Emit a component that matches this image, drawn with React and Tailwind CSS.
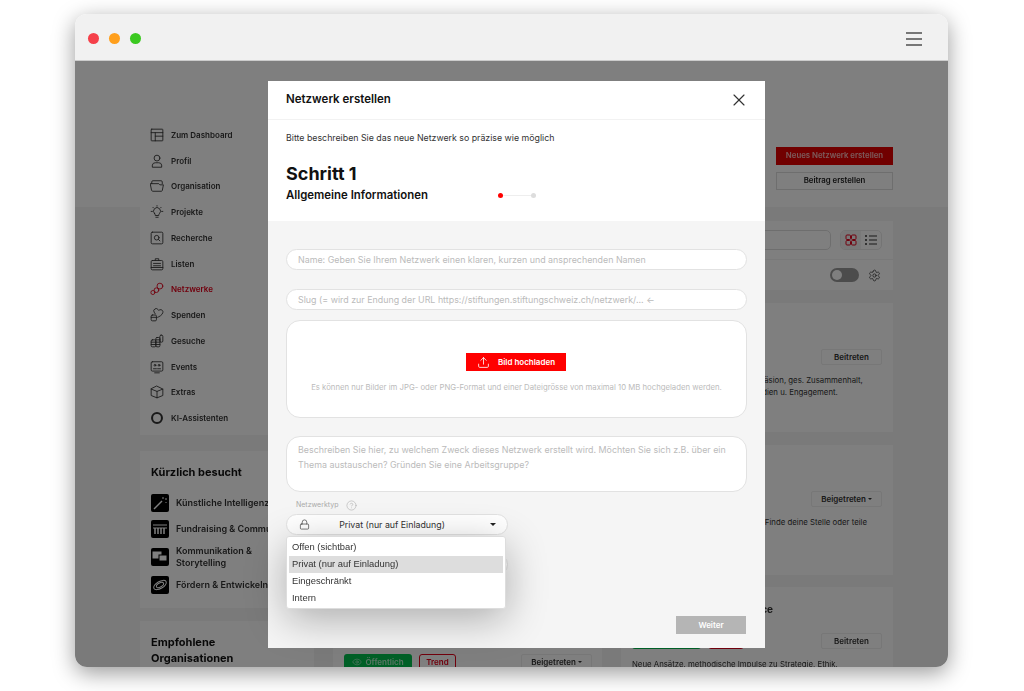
import { Settings, Lock, Upload, X, CircleHelp, Eye } from "lucide-react";

const FONT = "font-['Inter','Noto_Sans',sans-serif]";

// small outline icons of the sidebar, drawn on a 24 grid
const IconBase = ({ children }) => (
  <svg viewBox="0 0 24 24" className="w-[14px] h-[14px] shrink-0" fill="none" stroke="currentColor" strokeWidth="1.5" strokeLinecap="round" strokeLinejoin="round">
    {children}
  </svg>
);

const navIcons = {
  dashboard: <><rect x="2" y="2" width="20" height="20" rx="1" /><path d="M2 8h20M9 8v14M9 14h13" /></>,
  user: <><circle cx="12" cy="7" r="5" /><path d="M4 22v-3a5 5 0 0 1 5-4h6a5 5 0 0 1 5 4v3z" /></>,
  folder: <><path d="M3 8V5a2 2 0 0 1 2-2h14a2 2 0 0 1 2 2v3" /><path d="M1 8h14l2 2h6l-2 10a2 2 0 0 1-2 1H5a2 2 0 0 1-2-1z" /></>,
  bulb: <><path d="M8 15a6 6 0 1 1 8 0c-1 1-1 2-1 3H9c0-1 0-2-1-3z" /><path d="M10 21h4M12 1v1M2 11h2M20 11h2M5 4l1 1M19 4l-1 1" /></>,
  search: <><rect x="2" y="2" width="20" height="20" rx="2" /><circle cx="11.5" cy="11.5" r="4" /><path d="M14.5 14.5L17 17" /></>,
  list: <><rect x="2" y="6" width="20" height="16" rx="2" /><path d="M9 6V3h6v3M6 11h12M6 15h12M2 18h20" /></>,
  network: <><circle cx="17" cy="7" r="5" /><circle cx="11" cy="14" r="4" /><circle cx="5" cy="18" r="3.5" /></>,
  heart: <><path d="M9 10L7 7a4 4 0 0 1 7-4l1 1 2-1a4 4 0 0 1 5 5c-1 4-6 7-9 8" /><rect x="2" y="12" width="9" height="10" rx="2" /><path d="M2 16h9" /></>,
  coins: <><rect x="2" y="10" width="8" height="12" rx="2" /><rect x="10" y="6" width="7" height="16" rx="2" /><rect x="17" y="2" width="5" height="12" rx="2" /><path d="M2 14h8M2 18h8M10 10h7M10 14h7M10 18h7" /></>,
  events: <><rect x="2" y="3" width="20" height="16" rx="2" /><path d="M8 22h8" /><circle cx="8.5" cy="9" r="1.5" /><circle cx="15.5" cy="9" r="1.5" /><path d="M6 15h5M13 15h5" /></>,
  box: <><path d="M12 2l10 5v11l-10 4-10-4V7z" /><path d="M2 7l10 4 10-4M12 11v11" /></>,
  ring: <circle cx="12" cy="12" r="8.5" strokeWidth="3.5" />,
};

const navItems = [
  ["dashboard", "Zum Dashboard"],
  ["user", "Profil"],
  ["folder", "Organisation"],
  ["bulb", "Projekte"],
  ["search", "Recherche"],
  ["list", "Listen"],
  ["network", "Netzwerke"],
  ["heart", "Spenden"],
  ["coins", "Gesuche"],
  ["events", "Events"],
  ["box", "Extras"],
  ["ring", "KI-Assistenten"],
];

const Thumb = ({ children }) => (
  <div className="w-[18px] h-[18px] bg-black rounded-[2px] shrink-0">
    <svg viewBox="0 0 18 18" className="w-full h-full" fill="none" stroke="white" strokeWidth="1">{children}</svg>
  </div>
);

function Sidebar() {
  return (
    <div className="w-[174px] shrink-0 flex flex-col">
      <div className="bg-white h-[326px] pl-[10px] pt-[13px]">
        {navItems.map(([icon, label]) => (
          <div key={label} className={`h-[25.75px] flex items-center gap-[7px] text-[8px] font-semibold ${label === "Netzwerke" ? "text-[#e2001a]" : "text-[#333]"}`}>
            <IconBase>{navIcons[icon]}</IconBase>
            <span>{label}</span>
          </div>
        ))}
      </div>

      <div className="bg-white h-[157px] mt-[16px] px-[11px] pt-[13px] overflow-hidden">
        <h3 className="text-[11px] leading-[16px] font-bold text-[#111]">Kürzlich besucht</h3>
        <div className="mt-[14px] flex flex-col gap-[8px] text-[9px] font-semibold text-[#333]">
          <div className="flex items-center gap-[7px] whitespace-nowrap">
            <Thumb><path d="M3 15l8-8" strokeWidth="1.5" /><path d="M12 3v2M14 5h2M15 8v1" /></Thumb>
            <span>Künstliche Intelligenz</span>
          </div>
          <div className="flex items-center gap-[7px] whitespace-nowrap">
            <Thumb><path d="M2 5h14M2 8h14" /><path d="M4 8v6M7 8v6M10 8v6M13 8v6" strokeWidth="1.5" /></Thumb>
            <span>Fundraising &amp; Communication</span>
          </div>
          <div className="flex items-start gap-[7px] mt-[2px]">
            <Thumb><rect x="2" y="4" width="8" height="6" fill="white" /><rect x="8" y="7" width="8" height="6" fill="white" stroke="black" /></Thumb>
            <span className="leading-[12px] mt-[-3px]">Kommunikation &amp;<br />Storytelling</span>
          </div>
          <div className="flex items-center gap-[7px] whitespace-nowrap mt-[-1px]">
            <Thumb><ellipse cx="9" cy="9" rx="7" ry="3.5" transform="rotate(-30 9 9)" /><ellipse cx="9" cy="9" rx="4" ry="2" transform="rotate(-30 9 9)" /></Thumb>
            <span>Fördern &amp; Entwickeln</span>
          </div>
        </div>
      </div>

      <div className="bg-white mt-[13px] px-[11px] pt-[13px] h-[100px]">
        <h3 className="text-[11px] leading-[16px] font-bold text-[#111]">Empfohlene<br />Organisationen</h3>
      </div>
    </div>
  );
}

const JoinButton = ({ children, className = "px-[12px]" }) => (
  <div className={`h-[16px] border border-[#eee] rounded-[2px] flex items-center gap-[2px] text-[8px] font-semibold text-[#333] whitespace-nowrap ${className}`}>
    {children}
  </div>
);

const Caret = () => <span className="border-x-[2px] border-x-transparent border-t-[2px] border-t-[#333]" />;

function Main() {
  return (
    <div className="w-[560px] shrink-0 flex flex-col">
      <div className="mt-[38px] self-end w-[117px] flex flex-col gap-[7px] text-[7.8px] font-semibold">
        <div className="h-[18px] bg-[#e30000] text-white/70 flex items-center justify-center">Neues Netzwerk erstellen</div>
        <div className="h-[18px] border border-[#ddd] text-[#222] flex items-center justify-center">Beitrag erstellen</div>
      </div>

      <div className="mt-[31px] bg-white h-[69px] flex flex-col">
        <div className="h-[39px] border-b border-[#f2f2f2] flex items-center justify-end pr-[11px] gap-[9px]">
          <div className="w-[200px] h-[20px] border border-[#ddd] rounded-[5px]" />
          <div className="w-[42px] h-[20px] border border-[#e8e8e8] rounded-[5px] flex overflow-hidden">
            <div className="w-[20px] bg-[#f2f2f2] flex items-center justify-center">
              <svg viewBox="0 0 12 12" className="w-[12px] h-[12px]" fill="none" stroke="#e2001a" strokeWidth="1"><rect x="1" y="1" width="4.5" height="4.5" rx="1" /><rect x="6.5" y="1" width="4.5" height="4.5" rx="1" /><rect x="1" y="6.5" width="4.5" height="4.5" rx="1" /><rect x="6.5" y="6.5" width="4.5" height="4.5" rx="1" /></svg>
            </div>
            <div className="flex-1 flex items-center justify-center">
              <svg viewBox="0 0 12 12" className="w-[12px] h-[12px]" fill="none" stroke="#333" strokeWidth="1"><path d="M4 2h8M4 6h8M4 10h8" /><path d="M0 2h2M0 6h2M0 10h2" strokeWidth="1.6" /></svg>
            </div>
          </div>
        </div>
        <div className="flex-1 flex items-center justify-end pr-[12px] gap-[9px]">
          <div className="w-[29px] h-[14px] rounded-full bg-[#999] p-[2px]"><div className="w-[10px] h-[10px] rounded-full bg-white" /></div>
          <Settings className="w-[13px] h-[13px] text-[#333]" strokeWidth={1.4} />
        </div>
      </div>

      <div className="mt-[13px] grid grid-cols-[269px_272px] gap-x-[19px] gap-y-[12.5px]">
        <div className="bg-white h-[129px]" />
        <div className="bg-white h-[129px] px-[11px] pt-[46px]">
          <div className="flex justify-end"><JoinButton>Beitreten</JoinButton></div>
          <p className="mt-[9px] ml-[118px] text-[7.8px] leading-[12px] text-[#333] whitespace-nowrap">Kohäsion, ges. Zusammenhalt,<br />Studien u. Engagement.</p>
        </div>
        <div className="bg-white h-[130px]" />
        <div className="bg-white h-[130px] px-[11px] pt-[46px]">
          <div className="flex justify-end"><JoinButton className="px-[9px]">Beigetreten <Caret /></JoinButton></div>
          <p className="mt-[9px] ml-[8px] text-[7.8px] leading-[12px] text-[#333] whitespace-nowrap">Offene Stellen im Stiftungssektor. Finde deine Stelle oder teile</p>
        </div>
        <div className="bg-white h-[120px] px-[11px] pt-[67px]">
          <div className="flex items-center gap-[7px]">
            <div className="w-[68px] h-[16px] bg-[#00c04f] rounded-[3px] text-white/70 text-[8px] font-semibold flex items-center justify-center gap-[3px]"><Eye className="w-[10px] h-[10px]" strokeWidth={1.5} />Öffentlich</div>
            <div className="w-[37px] h-[16px] border border-[#e2001a] rounded-[3px] text-[#e2001a] text-[8px] font-semibold flex items-center justify-center">Trend</div>
            <div className="ml-auto mr-[-1px]"><JoinButton className="px-[9px]">Beigetreten <Caret /></JoinButton></div>
          </div>
        </div>
        <div className="bg-white h-[120px] px-[11px] pt-[14px]">
          <p className="text-[10px] leading-[16px] font-bold text-[#333] text-right pr-[109px]">Governance</p>
          <div className="mt-[16px] flex items-center gap-[7px]">
            <div className="w-[69px] h-[16px] bg-[#00c04f] rounded-[3px]" />
            <div className="w-[36px] h-[16px] border border-[#e2001a] rounded-[3px]" />
            <div className="ml-auto"><JoinButton>Beitreten</JoinButton></div>
          </div>
          <p className="mt-[9px] text-[7.8px] leading-[12px] text-[#333] whitespace-nowrap">Neue Ansätze, methodische Impulse zu Strategie, Ethik,</p>
        </div>
      </div>
    </div>
  );
}

const Field = ({ children, className = "" }) => (
  <div className={`h-[21px] px-[11px] shrink-0 bg-white border border-[#e2e2e2] rounded-full flex items-center text-[8.9px] text-[#bbb] whitespace-nowrap ${className}`}>
    {children}
  </div>
);

function Modal() {
  return (
    <div className="absolute left-[193px] top-[20px] w-[497px] h-[567px] bg-white flex flex-col">
      <div className="h-[39px] shrink-0 px-[18px] border-b border-[#f2f2f2] flex items-center justify-between">
        <h2 className="text-[11.5px] font-semibold text-[#111]">Netzwerk erstellen</h2>
        <X className="w-[20px] h-[20px] text-[#333] mr-[-2px]" strokeWidth={1.4} />
      </div>
      <div className="h-[101px] shrink-0 px-[18px] pt-[11px]">
        <p className="text-[8.8px] leading-[14px] text-[#333]">Bitte beschreiben Sie das neue Netzwerk so präzise wie möglich</p>
        <p className="mt-[18px] text-[18px] leading-[22px] font-bold text-[#111]">Schritt 1</p>
        <div className="mt-[2px] flex items-center">
          <p className="w-[212px] text-[11.4px] leading-[16px] font-semibold text-[#111] whitespace-nowrap">Allgemeine Informationen</p>
          <div className="w-[5px] h-[5px] rounded-full bg-[#f00]" />
          <div className="w-[28px] h-px bg-[#eee]" />
          <div className="w-[5px] h-[5px] rounded-full bg-[#ddd]" />
        </div>
      </div>

      <div className="relative flex-1 min-h-0 bg-[#f5f5f5] px-[18px] pt-[28px] flex flex-col">
        <Field>Name: Geben Sie Ihrem Netzwerk einen klaren, kurzen und ansprechenden Namen</Field>
        <Field className="mt-[19px]">Slug (= wird zur Endung der URL https://stiftungen.stiftungschweiz.ch/netzwerk/... &lt;-</Field>
        <div className="mt-[10px] h-[98px] shrink-0 bg-white border border-[#e2e2e2] rounded-[14px] flex flex-col items-center pt-[32px]">
          <div className="w-[100px] h-[18px] mr-[1px] bg-[#f00] text-white text-[8px] font-semibold flex items-center justify-center gap-[8px]">
            <Upload className="w-[13px] h-[13px]" strokeWidth={1.5} />
            <span>Bild hochladen</span>
          </div>
          <p className="mt-[10px] text-[7.75px] leading-[12px] text-[#bbb] whitespace-nowrap">Es können nur Bilder im JPG- oder PNG-Format und einer Dateigrösse von maximal 10 MB hochgeladen werden.</p>
        </div>
        <div className="mt-[18px] h-[56px] shrink-0 bg-white border border-[#e2e2e2] rounded-[14px] px-[11px] pt-[5px] text-[8.9px] leading-[15px] text-[#bbb]">
          Beschreiben Sie hier, zu welchem Zweck dieses Netzwerk erstellt wird. Möchten Sie sich z.B. über ein Thema austauschen? Gründen Sie eine Arbeitsgruppe?
        </div>
        <div className="mt-[6px] h-[15px] shrink-0 pl-[10px] flex items-center gap-[8px] text-[7px] text-[#aaa]">
          <span>Netzwerktyp</span>
          <CircleHelp className="w-[11px] h-[11px]" strokeWidth={1.2} />
        </div>
        <div className="mt-[1px] h-[21px] w-[222px] shrink-0 bg-white border border-[#e2e2e2] rounded-full flex items-center pl-[12px] pr-[11px] text-[8.8px] text-[#333]">
          <Lock className="w-[11px] h-[11px] shrink-0" strokeWidth={1.4} />
          <span className="flex-1 text-center pr-[16px]">Privat (nur auf Einladung)</span>
          <span className="border-x-[3px] border-x-transparent border-t-[3px] border-t-[#222]" />
        </div>
        <Field className="mt-[18px] w-[222px] h-[23px]" />

        <div className="mt-auto mb-[14px] mr-[1px] self-end w-[70px] h-[18px] bg-[#b5b5b5] text-white text-[8px] font-semibold flex items-center justify-center">Weiter</div>

        {/* open dropdown of Netzwerktyp */}
        <div className="absolute left-[18px] top-[315px] w-[220px] h-[73px] bg-white rounded-[3px] border border-[#ddd] pt-[2px] px-[2px] font-['Liberation_Sans',sans-serif] text-[9.4px] text-[#333] shadow-[0_10px_40px_rgba(0,0,0,0.3)]">
          <div className="h-[17px] px-[3px] flex items-center">Offen (sichtbar)</div>
          <div className="h-[17px] px-[3px] flex items-center bg-[#ddd]">Privat (nur auf Einladung)</div>
          <div className="h-[17px] px-[3px] flex items-center">Eingeschränkt</div>
          <div className="h-[17px] px-[3px] flex items-center">Intern</div>
        </div>
      </div>
    </div>
  );
}

export default function App() {
  return (
    <div className={`w-[1024px] h-[691px] bg-white pt-[14px] pl-[75px] overflow-hidden ${FONT}`}>
      <div className="w-[873px] h-[653px] rounded-[12px] overflow-hidden flex flex-col shadow-[0_6px_22px_rgba(0,0,0,0.4)] blur-[0.35px]">
        <div className="h-[47px] shrink-0 bg-[#f1f1f1] border-b border-[#ccc] pl-[13px] pr-[26px] pt-[2px] flex items-center gap-[10px]">
          <span className="w-[11px] h-[11px] rounded-full bg-[#f5404a]" />
          <span className="w-[11px] h-[11px] rounded-full bg-[#ff9f1c]" />
          <span className="w-[11px] h-[11px] rounded-full bg-[#3bc920]" />
          <div className="ml-auto mt-[1px] w-[16px] flex flex-col gap-[4px]">
            <span className="h-[2px] bg-[#777]" />
            <span className="h-[2px] bg-[#777]" />
            <span className="h-[2px] bg-[#777]" />
          </div>
        </div>
        <div className="relative flex-1 min-h-0 overflow-hidden bg-[linear-gradient(#fff_146px,#f4f4f4_146px)] pl-[65px] pt-[48px] flex items-start gap-[19px]">
          <Sidebar />
          <Main />
          {/* dimmed backdrop of the modal */}
          <div className="absolute inset-0 bg-black/50" />
          <Modal />
        </div>
      </div>
    </div>
  );
}
